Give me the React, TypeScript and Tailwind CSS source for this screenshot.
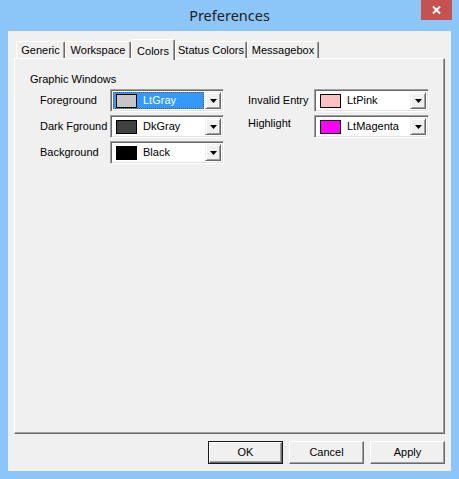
import React from "react";

function Arrow() {
  return (
    <svg width="7" height="4" viewBox="0 0 7 4">
      <path d="M0 0H7L3.5 4Z" fill="#000" />
    </svg>
  );
}

function Combo({
  color,
  text,
  focused,
  width,
}: {
  color: string;
  text: string;
  focused?: boolean;
  width: string;
}) {
  return (
    <div
      className={`${width} h-[23px] bg-white flex items-stretch border border-t-[#a0a0a0] border-l-[#a0a0a0] border-r-white border-b-white shadow-[inset_1px_1px_0_#696969,inset_-1px_-1px_0_#e3e3e3] p-[2px]`}
    >
      <div
        className={
          focused
            ? "flex-1 flex items-center bg-[#3399ff] text-white border border-dotted border-[#6b5a2a]"
            : "flex-1 flex items-center text-black border border-transparent"
        }
      >
        <div
          className="ml-[2px] w-[21px] h-[14px] border border-black"
          style={{ backgroundColor: color }}
        />
        <span className="ml-[6px] leading-none">{text}</span>
      </div>
      <div className="ml-[1px] w-[16px] bg-[#f0f0f0] flex items-center justify-center border border-t-[#f0f0f0] border-l-[#f0f0f0] border-r-[#696969] border-b-[#696969] shadow-[inset_1px_1px_0_#ffffff,inset_-1px_-1px_0_#a0a0a0]">
        <Arrow />
      </div>
    </div>
  );
}

function Tab({ label, w, selected }: { label: string; w: string; selected?: boolean }) {
  if (selected) {
    return (
      <div
        className={`${w} h-[21px] -mb-[2px] relative z-10 bg-[#f0f0f0] flex items-start justify-center pt-[3px] border-t border-l border-white border-r border-r-[#696969] rounded-t-[2px] shadow-[inset_-1px_0_0_#a0a0a0]`}
      >
        {label}
      </div>
    );
  }
  return (
    <div
      className={`${w} h-[17px] bg-[#f0f0f0] flex items-center justify-center border-t border-l border-white border-r border-r-[#696969] rounded-t-[2px] shadow-[inset_-1px_0_0_#a0a0a0]`}
    >
      {label}
    </div>
  );
}

function Btn({ label, def }: { label: string; def?: boolean }) {
  return (
    <div
      className={
        def
          ? "w-[75px] h-[23px] border border-[#1a1a1a] flex"
          : "w-[75px] h-[23px] flex"
      }
    >
      <div className="flex-1 bg-[#f0f0f0] flex items-center justify-center border border-t-white border-l-white border-r-[#696969] border-b-[#696969] shadow-[inset_-1px_-1px_0_#a0a0a0]">
        {label}
      </div>
    </div>
  );
}

export default function App() {
  return (
    <div className="w-[459px] h-[479px] bg-[#8cc5f7] flex flex-col font-['Liberation_Sans',Arial,sans-serif] text-[11px] text-black">
      <div className="h-[31px] relative flex justify-center">
        <span className="mt-[5px] font-['Noto_Sans',sans-serif] text-[14.5px] text-[#222]">
          Preferences
        </span>
        <div className="absolute right-[7px] top-0 w-[31px] h-[20px] bg-[#c75050] flex items-center justify-center">
          <svg width="9" height="8" viewBox="0 0 9 8">
            <path d="M1 0.5L8 7.5M8 0.5L1 7.5" stroke="#fff" strokeWidth="2" />
          </svg>
        </div>
      </div>
      <div className="mx-[8px] h-[440px] bg-[#f0f0f0] flex flex-col px-[6px] pt-[8px]">
        <div className="h-[19px] flex items-end pl-[2px]">
          <Tab label="Generic" w="w-[49px]" />
          <Tab label="Workspace" w="w-[66px]" />
          <Tab label="Colors" w="w-[44px]" selected />
          <Tab label="Status Colors" w="w-[72px]" />
          <Tab label="Messagebox" w="w-[72px]" />
        </div>
        <div className="h-[376px] border border-t-white border-l-white border-r-[#696969] border-b-[#696969] shadow-[inset_-1px_-1px_0_#a0a0a0] pl-[15px] pt-[14px] flex flex-col">
          <div className="h-[13px] leading-[13px]">Graphic Windows</div>
          <div className="mt-[3px] ml-[10px] flex">
            <div className="flex flex-col gap-[3px]">
              <div className="h-[23px] flex items-center">
                <span className="w-[70px]">Foreground</span>
                <Combo color="#c6c6c6" text="LtGray" focused width="w-[114px]" />
              </div>
              <div className="h-[23px] flex items-center">
                <span className="w-[70px]">Dark Fground</span>
                <Combo color="#404040" text="DkGray" width="w-[114px]" />
              </div>
              <div className="h-[23px] flex items-center">
                <span className="w-[70px]">Background</span>
                <Combo color="#000000" text="Black" width="w-[114px]" />
              </div>
            </div>
            <div className="ml-[24px] flex flex-col gap-[3px]">
              <div className="h-[23px] flex items-center">
                <span className="w-[66px]">Invalid Entry</span>
                <Combo color="#ffc0c0" text="LtPink" width="w-[115px]" />
              </div>
              <div className="h-[23px] flex items-center">
                <span className="w-[66px] -mt-[6px]">Highlight</span>
                <Combo color="#ff00ff" text="LtMagenta" width="w-[115px]" />
              </div>
            </div>
          </div>
        </div>
        <div className="mt-[7px] flex justify-end gap-[6px]">
          <Btn label="OK" def />
          <Btn label="Cancel" />
          <Btn label="Apply" />
        </div>
      </div>
    </div>
  );
}
